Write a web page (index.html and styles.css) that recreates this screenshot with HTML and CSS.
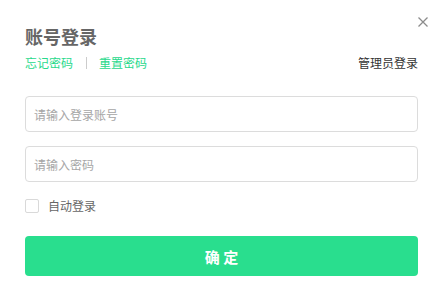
FILE: index.html
```html
<!DOCTYPE html>
<html lang="zh">
<head>
<meta charset="utf-8">
<link rel="stylesheet" href="styles.css">
</head>
<body>
<div class="dialog">
  <button class="close" aria-label="关闭">
    <svg width="10" height="10" viewBox="0 0 10 10"><path d="M0.5 0.5L9.5 9.5M9.5 0.5L0.5 9.5" stroke="#8c8c8c" stroke-width="1.3" fill="none"/></svg>
  </button>
  <h1 class="title">账号登录</h1>
  <div class="links">
    <div class="left-links">
      <a class="link">忘记密码</a>
      <span class="sep"></span>
      <a class="link">重置密码</a>
    </div>
    <a class="admin">管理员登录</a>
  </div>
  <div class="field"><input class="input" type="text" placeholder="请输入登录账号"></div>
  <div class="field"><input class="input" type="password" placeholder="请输入密码"></div>
  <label class="remember"><span class="box"></span><span class="remember-text">自动登录</span></label>
  <button class="submit">确 定</button>
</div>
</body>
</html>
```
FILE: styles.css
```css
* { box-sizing: border-box; }
html, body { margin: 0; padding: 0; background: #fff; }
body { font-family: "Noto Sans CJK SC", "Noto Sans", sans-serif; }
.dialog {
  position: relative;
  width: 444px;
  height: 305px;
  padding: 24px 26px 0 25px;
}
.close {
  position: absolute;
  top: 17px;
  left: 418px;
  width: 10px;
  height: 10px;
  padding: 0;
  border: 0;
  background: none;
  display: flex;
}
.title {
  margin: 0;
  font-size: 18px;
  line-height: 24px;
  font-weight: 700;
  color: #666;
}
.links {
  display: flex;
  justify-content: space-between;
  align-items: center;
  margin-top: 7px;
  height: 16px;
}
.left-links { display: flex; align-items: center; }
.link { font-size: 12px; line-height: 16px; color: #27d98b; }
.sep {
  width: 1px;
  height: 12px;
  background: #ccc;
  margin: 0 12px 0 13px;
}
.admin { font-size: 12px; line-height: 16px; color: #333; margin-right: 0; }
.field { margin-top: 25px; }
.field + .field { margin-top: 14px; }
.input {
  display: block;
  width: 100%;
  height: 36px;
  border: 1px solid #dcdcdc;
  border-radius: 4px;
  padding: 0 8px;
  font-family: inherit;
  font-size: 12px;
  color: #333;
  outline: none;
}
.input::placeholder { color: #a6a6a6; }
.remember {
  display: flex;
  align-items: center;
  margin-top: 16px;
  height: 16px;
}
.box {
  width: 14px;
  height: 14px;
  border: 1px solid #d9d9d9;
  border-radius: 2px;
  background: #fff;
}
.remember-text {
  margin-left: 9px;
  font-size: 12px;
  line-height: 16px;
  color: #666;
}
.submit {
  display: block;
  width: 100%;
  height: 40px;
  margin-top: 22px;
  border: 0;
  border-radius: 4px;
  background: #29de8e;
  color: #fff;
  font-family: inherit;
  font-size: 15px;
  font-weight: 700;
  letter-spacing: 0;
}
```
